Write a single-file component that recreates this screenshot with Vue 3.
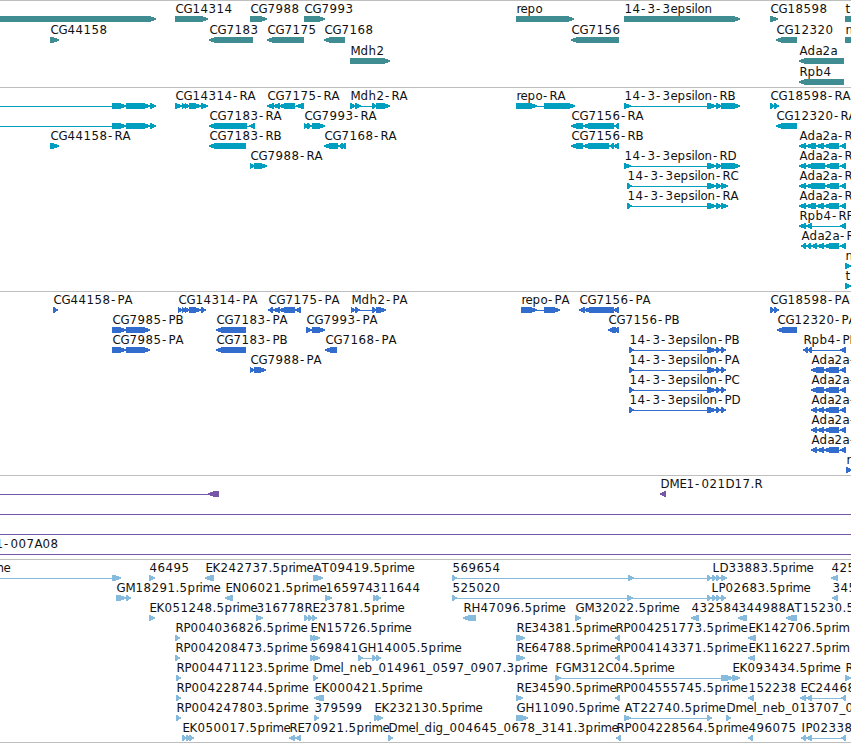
<template>
  <div class="browser">
    <section v-for="track in tracks" :key="track.name" class="track" :class="track.name">
      <svg class="canvas" :width="WIDTH" :height="track.height">
        <g v-for="(f, i) in track.features" :key="i">
          <rect
              v-if="f.line"
              class="shape"
              :x="f.line[0]"
              :y="f.y + 6"
              :width="f.line[1] - f.line[0]"
              height="1"
          />
          <polygon v-for="(points, p) in f.arrows" :key="p" class="shape" :points="points" />
        </g>
        <text
            v-for="(f, i) in track.features"
            :key="'t' + i"
            class="label"
            :x="f.glyphs"
            :y="f.y"
        >{{ f.label }}</text>
      </svg>
    </section>
  </div>
</template>

<script setup>
const WIDTH = 851

// Advance of each character, in whole pixels
const ADVANCE = {
  A: 8, B: 7, C: 8, D: 9, E: 7, F: 7, G: 9, H: 9, I: 4, K: 8, L: 7, M: 10,
  N: 9, P: 7, R: 8, T: 8, a: 7, b: 8, d: 8, e: 7, g: 8, h: 8, i: 3, l: 3,
  m: 11, n: 8, o: 7, p: 8, r: 4, s: 6, t: 5, '-': 7, '.': 4, _: 6
}

function glyphPositions(label, x) {
  let pos = x + 0.4
  return [...label].map((ch) => {
    const at = ch === '-' ? pos + 0.6 : pos
    pos += ADVANCE[ch] ?? 8
    return at
  }).join(' ')
}

// One block of a feature, pointed at the end it is read towards
function arrow(start, end, dir, top) {
  const width = end - start
  const head = width <= 6 ? width - 0.6 : 6
  const [tail, tip, sign] = dir === '+' ? [start, end, 1] : [end, start, -1]
  const neck = tip - sign * head
  const bend = tip - sign * head * 0.5
  return [
    [tail, top],
    [neck, top],
    [bend, top + 1.2],
    [tip, top + 2.4],
    [tip, top + 3.6],
    [bend, top + 4.8],
    [neck, top + 6],
    [tail, top + 6]
  ].map(p => p.join(',')).join(' ')
}

// [row, label, direction, blocks, label x, line]
function build(rows, pitch) {
  return rows.map(([row, label, dir, blocks, labelX, line]) => {
    const parts = blocks ? blocks.split(' ').map(b => b.split(':').map(Number)) : []
    const y = 12 + row * pitch
    const x = labelX ?? (parts.length ? parts[0][0] : 0)
    return {
      label,
      y,
      glyphs: glyphPositions(label, x),
      arrows: parts.map(([s, e]) => arrow(s, e, dir, y + 3)),
      line: line ?? (parts.length > 1 ? [parts[0][0], parts[parts.length - 1][1] - 1] : null)
    }
  })
}

const genes = [
  [0, '', '+', '-10:156'],
  [0, 'CG14314', '+', '175:208'],
  [0, 'CG7988', '+', '250:267'],
  [0, 'CG7993', '+', '304:325'],
  [0, 'repo', '+', '516:574'],
  [0, '14-3-3epsilon', '+', '624:740'],
  [0, 'CG18598', '+', '770:778'],
  [0, 'ta', '+', '845:870'],
  [1, 'CG44158', '+', '50:59'],
  [1, 'CG7183', '-', '209:253'],
  [1, 'CG7175', '-', '267:304'],
  [1, 'CG7168', '-', '324:345'],
  [1, 'CG7156', '-', '571:619'],
  [1, 'CG12320', '-', '776:797'],
  [1, 'n', '+', '845:870'],
  [2, 'Mdh2', '+', '350:390'],
  [2, 'Ada2a', '-', '799:844'],
  [3, 'Rpb4', '-', '799:844']
]

const ada5 = '799:806 806:816 816:824 824:839 840:846'
const ada4 = '799:806 806:825 825:839 840:846'

const transcripts = [
  [0, '', '+', '112:126 126:150 150:156', 0, [0, 155]],
  [0, 'CG14314-RA', '+', '175:182 182:186 185:189 189:201 201:208'],
  [0, 'CG7175-RA', '-', '267:274 273:280 279:295 296:304'],
  [0, 'Mdh2-RA', '+', '350:356 355:361 372:377 376:390'],
  [0, 'repo-RA', '+', '516:537 544:575'],
  [0, '14-3-3epsilon-RB', '+', '624:631 707:716 716:722 721:740'],
  [0, 'CG18598-RA', '+', '770:775 774:779'],
  [1, '', '+', '112:126 126:150 150:156', 0, [0, 155]],
  [1, 'CG7183-RA', '-', '209:247 249:255'],
  [1, 'CG7993-RA', '+', '304:308 307:312 312:325'],
  [1, 'CG7156-RA', '-', '571:583 583:614 614:619'],
  [1, 'CG12320-RA', '-', '776:797'],
  [2, 'CG44158-RA', '+', '50:59'],
  [2, 'CG7183-RB', '-', '209:246'],
  [2, 'CG7168-RA', '-', '324:338 338:343 341:346'],
  [2, 'CG7156-RB', '-', '571:583 583:609 609:614 613:619'],
  [2, 'Ada2a-R', '-', ada5],
  [3, 'CG7988-RA', '+', '250:254 254:267'],
  [3, '14-3-3epsilon-RD', '+', '624:631 707:716 716:722 721:740'],
  [3, 'Ada2a-R', '-', ada4],
  [4, '14-3-3epsilon-RC', '+', '627:632 707:716 716:722 721:728'],
  [4, 'Ada2a-R', '-', ada4],
  [5, '14-3-3epsilon-RA', '+', '627:632 707:716 716:722 721:728'],
  [5, 'Ada2a-R', '-', ada5],
  [6, 'Rpb4-RF', '-', '799:806 806:812 840:846'],
  [7, 'Ada2a-R', '-', '801:806 806:811 811:817 817:824 824:839 840:846'],
  [8, 'n', '+', '845:851'],
  [9, 'ta', '+', '845:851']
]

const eps = '629:634 707:716 716:721 721:726'
const adaLong = '811:824 824:839 840:846'
const adaSplit = '811:817 817:824 824:839 840:846'

const proteins = [
  [0, 'CG44158-PA', '+', '53:58'],
  [0, 'CG14314-PA', '+', '178:182 182:186 185:189 189:201 201:206'],
  [0, 'CG7175-PA', '-', '268:273 273:280 279:295 295:301'],
  [0, 'Mdh2-PA', '+', '351:355 355:360 372:377 376:386'],
  [0, 'repo-PA', '+', '521:537 544:560'],
  [0, 'CG7156-PA', '-', '579:585 584:614 613:619'],
  [0, 'CG18598-PA', '+', '770:775 774:779'],
  [1, 'CG7985-PB', '+', '112:126 126:150'],
  [1, 'CG7183-PA', '-', '216:246'],
  [1, 'CG7993-PA', '+', '306:312 312:325'],
  [1, 'CG7156-PB', '-', '608:614 611:616 614:619'],
  [1, 'CG12320-PA', '-', '777:797'],
  [2, 'CG7985-PA', '+', '112:126 126:150'],
  [2, 'CG7183-PB', '-', '216:246'],
  [2, 'CG7168-PA', '-', '325:337'],
  [2, '14-3-3epsilon-PB', '+', eps],
  [2, 'Rpb4-PB', '-', '803:808 807:812 840:846'],
  [3, 'CG7988-PA', '+', '250:254 254:266'],
  [3, '14-3-3epsilon-PA', '+', eps],
  [3, 'Ada2a-', '-', adaLong],
  [4, '14-3-3epsilon-PC', '+', eps],
  [4, 'Ada2a-', '-', adaLong],
  [5, '14-3-3epsilon-PD', '+', eps],
  [5, 'Ada2a-', '-', adaSplit],
  [6, 'Ada2a-', '-', adaSplit],
  [7, 'Ada2a-', '-', adaSplit],
  [8, 'n', '+', '846:852']
]

const bacs = [
  [0, '', '-', '208:219', 0, [0, 210]],
  [0, 'DME1-021D17.R', '-', '660:666'],
  [1, '', '+', '', 0, [0, WIDTH]],
  [2, '', '+', '', 0, [0, WIDTH]],
  [3, 'DME1-007A08', '+', '', -31, [0, WIDTH]]
]

const ests = [
  [0, 'prime', '+', '112:121', -23, [0, 120]],
  [0, '46495', '+', '149:155'],
  [0, 'EK242737.5prime', '-', '205:214'],
  [0, 'AT09419.5prime', '+', '313:323'],
  [0, '569654', '+', '452:457 628:634 707:712 712:717 716:721 721:727'],
  [0, 'LD33883.5prime', '+', '', 712],
  [0, '425', '-', '831:838'],
  [1, 'GM18291.5prime', '+', '116:126 126:131'],
  [1, 'EN06021.5prime', '-', '225:233'],
  [1, '165974', '+', '325:332'],
  [1, '311644', '+', '373:378 376:381', 372],
  [1, '525020', '+', '452:457 627:633 707:712 712:717 716:721 721:726'],
  [1, 'LP02683.5prime', '+', '', 711],
  [1, '345', '-', '832:838'],
  [2, 'EK051248.5prime', '+', '149:155'],
  [2, '316778', '+', '256:263'],
  [2, 'RE23781.5prime', '+', '304:309 308:313 312:317'],
  [2, 'RH47096.5prime', '-', '463:476'],
  [2, 'GM32022.5prime', '+', '575:581'],
  [2, '432584', '-', '691:699'],
  [2, '344988', '-', '738:747'],
  [2, 'AT15230.5', '-', '786:797'],
  [3, 'RP004036826.5prime', '+', '175:180'],
  [3, 'EN15726.5prime', '+', '310:316 313:320'],
  [3, 'RE34381.5prime', '+', '516:525'],
  [3, 'RP004251773.5prime', '-', '615:620'],
  [3, 'EK142706.5prim', '-', '748:756'],
  [4, 'RP004208473.5prime', '+', '175:180'],
  [4, '569841', '+', '310:316 313:320'],
  [4, 'GH14005.5prime', '+', '358:363 372:377 376:381'],
  [4, 'RE64788.5prime', '+', '516:525'],
  [4, 'RP004143371.5prime', '-', '615:620'],
  [4, 'EK116227.5prim', '-', '748:755'],
  [5, 'RP004471123.5prime', '+', '176:181'],
  [5, 'Dmel_neb_014961_0597_0907.3prime', '+', '313:318'],
  [5, 'FGM312C04.5prime', '+', '555:561 721:733 732:740'],
  [5, 'EK093434.5prime', '+', '', 732],
  [5, 'R', '+', '845:851'],
  [6, 'RP004228744.5prime', '+', '176:181'],
  [6, 'EK000421.5prime', '-', '314:324'],
  [6, 'RE34590.5prime', '+', '516:523'],
  [6, 'RP004555745.5prime', '-', '615:620'],
  [6, '152238', '-', '748:754'],
  [6, 'EC24468', '-', '800:806 806:812 841:846'],
  [7, 'RP004247803.5prime', '+', '176:181'],
  [7, '379599', '+', '314:319'],
  [7, 'EK232130.5prime', '+', '374:380 377:383'],
  [7, 'GH11090.5prime', '+', '516:528'],
  [7, 'AT22740.5prime', '+', '624:631 707:712'],
  [7, 'Dmel_neb_013707_0', '+', '726:731'],
  [8, 'EK050017.5prime', '+', '182:187 186:191 189:194'],
  [8, 'RE70921.5prime', '-', '289:295 295:301'],
  [8, 'Dmel_dig_004645_0678_3141.3prime', '+', '388:393'],
  [8, 'RP004228564.5prime', '-', '616:621'],
  [8, '496075', '-', '748:753'],
  [8, 'IP02338', '-', '801:806 806:812 841:846']
]

const tracks = [
  { name: 'gene', height: 86, features: build(genes, 21) },
  { name: 'transcript', height: 203, features: build(transcripts, 20) },
  { name: 'protein', height: 183, features: build(proteins, 20) },
  { name: 'bac', height: 83, features: build(bacs, 20) },
  { name: 'est', height: 182, features: build(ests, 20) }
]
</script>

<style scoped>
.browser {
  display: flex;
  flex-direction: column;
  width: 851px;
  height: 743px;
  overflow: hidden;
  background: #fff;
}

.track {
  flex: none;
  border-top: 1px solid #bebebe;
}

.track:last-child {
  border-bottom: 1px solid #bebebe;
}

.canvas {
  display: block;
  overflow: hidden;
}

.shape {
  shape-rendering: crispEdges;
}

.label {
  fill: #111;
  font-family: "DejaVu Sans", sans-serif;
  font-size: 11.8px;
}

.gene .shape {
  fill: #408c93;
}

.transcript .shape {
  fill: #009fc0;
}

.protein .shape {
  fill: #326dcd;
}

.bac .shape {
  fill: #7756a7;
}

.est .shape {
  fill: #87bbdd;
}
</style>
